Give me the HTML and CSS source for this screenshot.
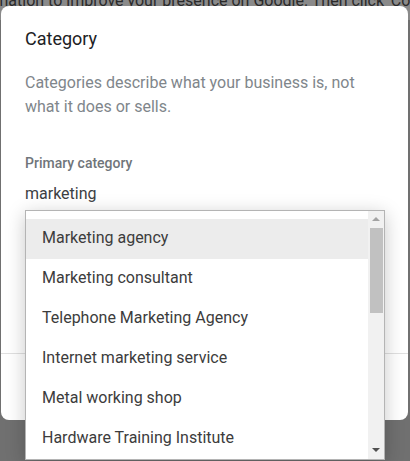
FILE: index.html
```html
<!DOCTYPE html>
<html>
    <head>
        <title>Category</title>
        <link rel="stylesheet" href="styles.css">
    </head>
    <body>
        <div class="page">
            <p class="pageText">Add information to improve your presence on Google. Then click 'Confirm'</p>
        </div>

        <div class="dialog">
            <h2 class="title">Category</h2>
            <p class="desc">Categories describe what your business is, not what it does or sells.</p>
            <div class="fieldLabel">Primary category</div>
            <div class="fieldValue">marketing</div>
            <div class="rule"></div>
        </div>

        <div class="dropdown">
            <ul class="options">
                <li class="option active">Marketing agency</li>
                <li class="option">Marketing consultant</li>
                <li class="option">Telephone Marketing Agency</li>
                <li class="option">Internet marketing service</li>
                <li class="option">Metal working shop</li>
                <li class="option">Hardware Training Institute</li>
            </ul>
            <div class="scrollbar">
                <span class="arrow up"></span>
                <span class="thumb"></span>
                <span class="arrow down"></span>
            </div>
        </div>
    </body>
</html>
```

FILE: styles.css
```css
html, body {
    margin: 0;
    padding: 0;
}

body {
    width: 410px;
    height: 461px;
    overflow: hidden;
    background-color: #707070;
    font-family: Roboto, "Liberation Sans", sans-serif;
    position: relative;
}

.page {
    height: 20px;
    background-color: #8a8a8a;
    overflow: hidden;
}

.pageText {
    margin: 0;
    margin-top: -9px;
    margin-left: -71px;
    white-space: nowrap;
    font-size: 16px;
    color: #2a2a2a;
}

.dialog {
    position: absolute;
    left: 1px;
    top: 6px;
    width: 407px;
    height: 414px;
    background-color: #ffffff;
    border-radius: 8px;
    padding: 0 24px;
    box-sizing: border-box;
}

.title {
    margin: 0;
    padding-top: 23px;
    font-size: 18px;
    font-weight: 400;
    line-height: 20px;
    color: #202124;
}

.desc {
    margin: 0;
    margin-top: 22px;
    font-size: 16px;
    line-height: 24px;
    color: #80868b;
}

.fieldLabel {
    margin-top: 36px;
    font-size: 14px;
    font-weight: 500;
    line-height: 16px;
    color: #70757a;
}

.fieldValue {
    margin-top: 13px;
    font-size: 16px;
    line-height: 20px;
    color: #3c4043;
}

.rule {
    position: absolute;
    left: 0;
    right: 0;
    top: 347px;
    border-top: 1px solid #e0e0e0;
}

.dropdown {
    position: absolute;
    left: 25px;
    top: 210px;
    width: 360px;
    height: 250px;
    box-sizing: border-box;
    border: 1px solid #b4b4b4;
    background-color: #ffffff;
    box-shadow: 0 4px 18px rgba(0, 0, 0, 0.22);
    display: flex;
}

.options {
    list-style: none;
    margin: 0;
    padding: 8px 0 0 0;
    flex: 1;
}

.option {
    height: 40px;
    line-height: 38px;
    padding-left: 16px;
    font-size: 16px;
    color: #3c3c3c;
}

.option.active {
    background-color: #ececec;
}

.scrollbar {
    width: 16px;
    background-color: #f1f1f1;
    display: flex;
    flex-direction: column;
    align-items: center;
}

.arrow {
    width: 0;
    height: 0;
    border-left: 4px solid transparent;
    border-right: 4px solid transparent;
}

.arrow.up {
    margin-top: 6px;
    border-bottom: 4px solid #a3a3a3;
}

.arrow.down {
    margin-top: auto;
    margin-bottom: 7px;
    border-top: 4px solid #505050;
}

.thumb {
    width: 13px;
    height: 85px;
    margin-top: 7px;
    background-color: #c1c1c1;
}
```
